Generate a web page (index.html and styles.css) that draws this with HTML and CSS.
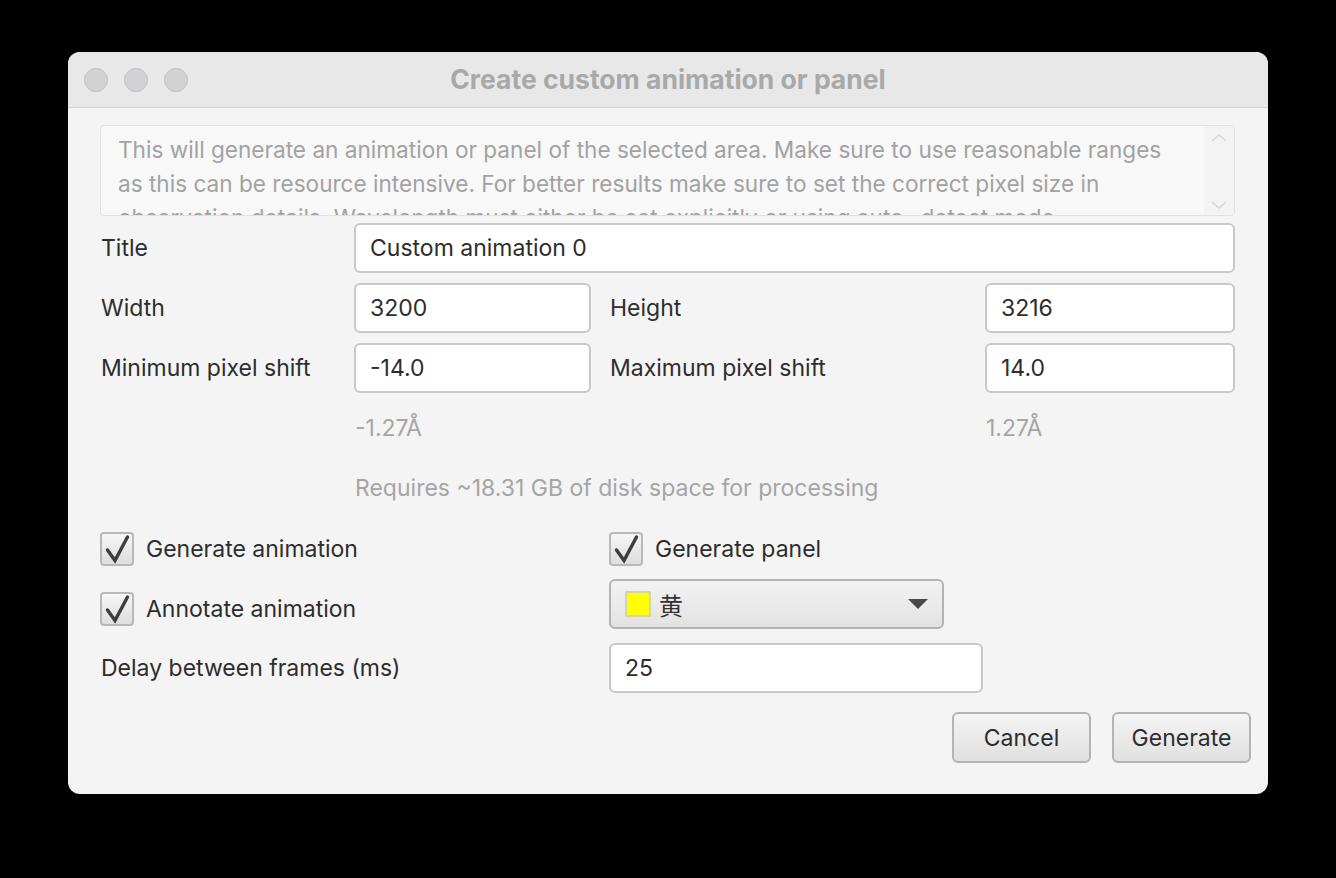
FILE: index.html
```html
<!DOCTYPE html>
<html>
<head>
<meta charset="utf-8">
<link rel="stylesheet" href="styles.css">
</head>
<body>
<div class="window">
  <div class="titlebar">
    <div class="lights"><span class="light"></span><span class="light"></span><span class="light"></span></div>
    <div class="wtitle">Create custom animation or panel</div>
  </div>
  <div class="content">
    <div class="textarea">
      <div class="tatext">This will generate an animation or panel of the selected area. Make sure to use reasonable ranges<br>as this can be resource intensive. For better results make sure to set the correct pixel size in<br>observation details. Wavelength must either be set explicitly or using auto- detect mode.</div>
      <div class="tascroll">
        <svg width="20" height="12" viewBox="0 0 20 12"><path d="M3 9 L10 3 L17 9" fill="none" stroke="#d6d6d6" stroke-width="1.6"/></svg>
        <svg width="20" height="12" viewBox="0 0 20 12"><path d="M3 3 L10 9 L17 3" fill="none" stroke="#d6d6d6" stroke-width="1.6"/></svg>
      </div>
    </div>
    <div class="form">
      <div class="lbl r1 c1">Title</div>
      <div class="field r1 span-all">Custom animation 0</div>

      <div class="lbl r2 c1">Width</div>
      <div class="field r2 c2">3200</div>
      <div class="lbl r2 c4">Height</div>
      <div class="field r2 c5">3216</div>

      <div class="lbl r3 c1">Minimum pixel shift</div>
      <div class="field r3 c2">-14.0</div>
      <div class="lbl r3 c4">Maximum pixel shift</div>
      <div class="field r3 c5">14.0</div>

      <div class="hint r4 c2">-1.27Å</div>
      <div class="hint r4 c5">1.27Å</div>

      <div class="hint r5 span-all">Requires ~18.31 GB of disk space for processing</div>

      <div class="check r6 c1 span-12"><span class="box"><svg width="34" height="34" viewBox="0 0 34 34"><path d="M7.5 18 L15 28.5 L27.5 5" fill="none" stroke="#3d3d3d" stroke-width="3.4" stroke-linejoin="miter" stroke-linecap="round"/></svg></span><span>Generate animation</span></div>
      <div class="check r6 c4"><span class="box"><svg width="34" height="34" viewBox="0 0 34 34"><path d="M7.5 18 L15 28.5 L27.5 5" fill="none" stroke="#3d3d3d" stroke-width="3.4" stroke-linejoin="miter" stroke-linecap="round"/></svg></span><span>Generate panel</span></div>

      <div class="check r7 c1 span-12"><span class="box"><svg width="34" height="34" viewBox="0 0 34 34"><path d="M7.5 18 L15 28.5 L27.5 5" fill="none" stroke="#3d3d3d" stroke-width="3.4" stroke-linejoin="miter" stroke-linecap="round"/></svg></span><span>Annotate animation</span></div>
      <div class="combo r7 c4"><span class="swatch"></span><span class="cjk">黄</span><span class="arrow"></span></div>

      <div class="lbl r8 c1 span-12 end">Delay between frames (ms)</div>
      <div class="field r8 c4 delay end">25</div>
    </div>
    <div class="buttons">
      <div class="btn">Cancel</div>
      <div class="btn">Generate</div>
    </div>
  </div>
</div>
</body>
</html>
```
FILE: styles.css
```css
html, body {
  margin: 0;
  padding: 0;
  background: #000;
}
body {
  padding: 52px 68px;
  font-family: Inter, "Liberation Sans", sans-serif;
}
.window {
  width: 1200px;
  height: 742px;
  border-radius: 12px;
  background: #f4f4f4;
  overflow: hidden;
  box-sizing: border-box;
}
.titlebar {
  height: 56px;
  box-sizing: border-box;
  border-bottom: 1px solid #d2d2d2;
  background: #e8e8e9;
  display: flex;
  align-items: center;
  position: relative;
}
.lights {
  display: flex;
  gap: 16px;
  padding-left: 16px;
  padding-top: 1px;
}
.light {
  width: 24px;
  height: 24px;
  box-sizing: border-box;
  border-radius: 50%;
  background: #d3d3d5;
  border: 1px solid #bdbdbf;
}
.wtitle {
  position: absolute;
  left: 0;
  right: 0;
  top: 0;
  bottom: 0;
  display: flex;
  align-items: center;
  justify-content: center;
  font-weight: 700;
  font-size: 26.5px;
  color: #a9a9aa;
  padding-bottom: 2px;
}
.content {
  padding: 17px 17px 31px 32px;
}
.textarea {
  width: 1135px;
  height: 91px;
  box-sizing: border-box;
  border: 1px solid #e0e0e0;
  border-radius: 4px;
  background: #f8f8f8;
  display: flex;
  overflow: hidden;
}
.tatext {
  flex: 1;
  padding: 7px 0 0 17px;
  font-size: 22.6px;
  line-height: 34px;
  color: #a2a2a2;
  white-space: nowrap;
  overflow: hidden;
}
.tascroll {
  width: 30px;
  background: #f3f3f3;
  display: flex;
  flex-direction: column;
  justify-content: space-between;
  align-items: center;
  padding: 6px 0 4px;
}
.form {
  margin-top: 7px;
  display: grid;
  grid-template-columns: 254px 237px 18px 376px 250px;
  grid-template-rows: 50px 50px 50px 50px 50px 46px 50px 54px;
  row-gap: 10px;
  font-size: 23px;
  color: #2d2d2d;
}
.r1 { grid-row: 1; }
.r2 { grid-row: 2; }
.r3 { grid-row: 3; }
.r4 { grid-row: 4; }
.r5 { grid-row: 5; }
.r6 { grid-row: 6; }
.r7 { grid-row: 7; }
.r8 { grid-row: 8; }
.c1 { grid-column: 1; }
.c2 { grid-column: 2; }
.c4 { grid-column: 4; }
.c5 { grid-column: 5; }
.span-all { grid-column: 2 / 6; }
.span-12 { grid-column: 1 / 3; }
.lbl {
  display: flex;
  align-items: center;
  padding-left: 1px;
}
.field {
  box-sizing: border-box;
  height: 50px;
  border: 2px solid #c9c9c9;
  border-radius: 6px;
  background: #fff;
  display: flex;
  align-items: center;
  padding-left: 14px;
}
.delay { width: 374px; }
.end { align-self: end; }
.lbl.end { height: 50px; }
.hint {
  display: flex;
  align-items: center;
  color: #a5a5a5;
  padding-left: 1px;
}
.check {
  display: flex;
  align-items: center;
  gap: 12px;
  align-self: end;
  margin-bottom: 3px;
  height: 34px;
}
.box {
  width: 34px;
  height: 34px;
  box-sizing: border-box;
  border: 2px solid #b8b8b8;
  border-radius: 4px;
  background: linear-gradient(#f6f6f6, #dedede);
  position: relative;
  flex: none;
}
.box svg {
  position: absolute;
  left: -2px;
  top: -2px;
}
.combo {
  width: 335px;
  height: 50px;
  box-sizing: border-box;
  border: 2px solid #b3b3b3;
  border-radius: 6px;
  background: linear-gradient(#f3f3f3, #e2e2e2);
  display: flex;
  align-items: center;
  padding-left: 14px;
}
.swatch {
  width: 26px;
  height: 26px;
  box-sizing: border-box;
  background: #ffff00;
  border: 2px solid #d4d4a4;
  flex: none;
}
.cjk {
  font-family: "Noto Sans CJK SC", "Noto Sans CJK JP", sans-serif;
  font-size: 24px;
  margin-left: 8px;
  color: #333;
}
.arrow {
  margin-left: auto;
  margin-right: 14px;
  width: 0;
  height: 0;
  border-left: 10px solid transparent;
  border-right: 10px solid transparent;
  border-top: 10px solid #4a4a4a;
}
.buttons {
  margin-top: 19px;
  display: flex;
  justify-content: flex-end;
  gap: 21px;
}
.btn {
  width: 139px;
  height: 51px;
  box-sizing: border-box;
  border: 2px solid #b4b4b4;
  border-radius: 6px;
  background: linear-gradient(#f4f4f4, #e0e0e0);
  display: flex;
  align-items: center;
  justify-content: center;
  font-size: 23px;
  color: #2d2d2d;
}
```
